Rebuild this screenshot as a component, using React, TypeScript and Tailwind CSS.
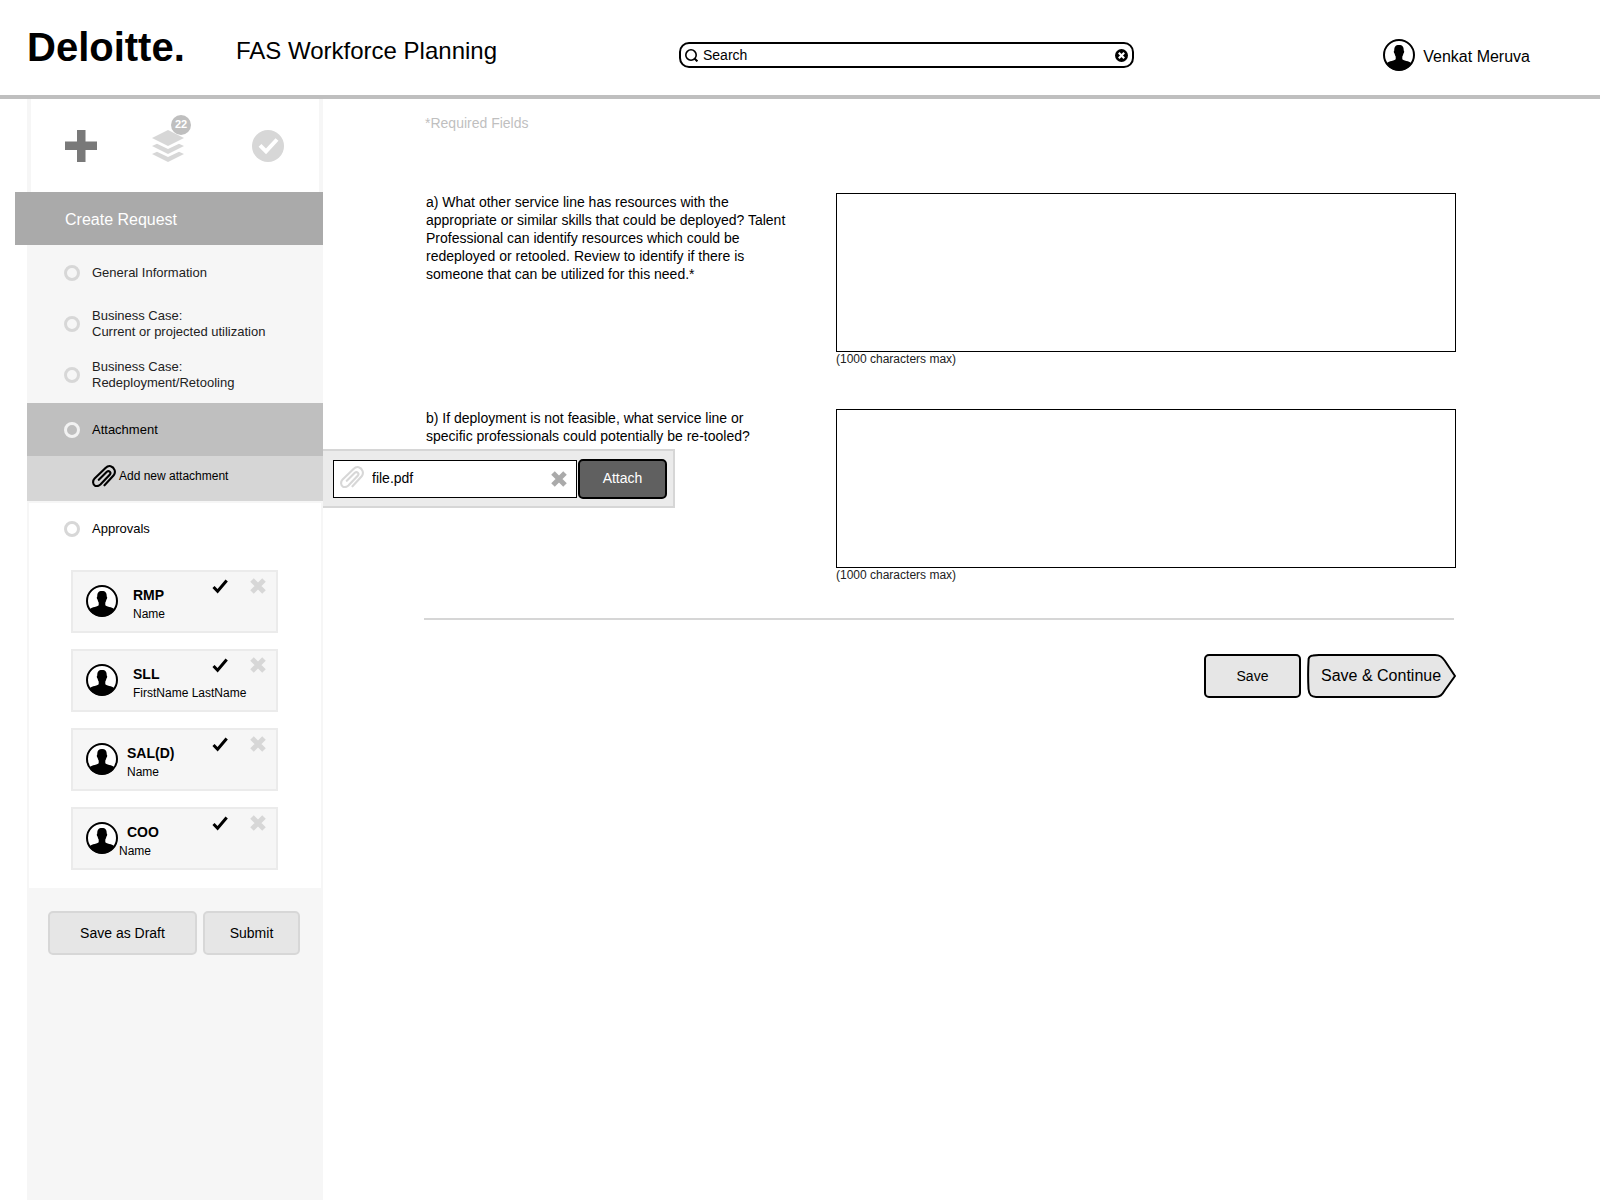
import clsx from 'clsx';

const steps = [
  { id: 'general', lines: ['General Information'] },
  { id: 'utilization', lines: ['Business Case:', 'Current or projected utilization'] },
  { id: 'redeployment', lines: ['Business Case:', 'Redeployment/Retooling'] },
];

const approvers = [
  { role: 'RMP', name: 'Name', indent: 'pl-[15px]', nameIndent: '' },
  { role: 'SLL', name: 'FirstName LastName', indent: 'pl-[15px]', nameIndent: '' },
  { role: 'SAL(D)', name: 'Name', indent: 'pl-[9px]', nameIndent: '' },
  { role: 'COO', name: 'Name', indent: 'pl-[9px]', nameIndent: '-ml-2' },
];

const questions = [
  {
    id: 'question-a',
    text: 'a) What other service line has resources with the appropriate or similar skills that could be deployed? Talent Professional can identify resources which could be redeployed or retooled. Review to identify if there is someone that can be utilized for this need.*',
  },
  {
    id: 'question-b',
    text: 'b) If deployment is not feasible, what service line or specific professionals could potentially be re-tooled?',
  },
];

function Avatar() {
  return (
    <svg viewBox="0 0 32 32" className="h-8 w-8 shrink-0" aria-hidden="true">
      <circle cx="16" cy="16" r="15" fill="white" stroke="black" strokeWidth="2" />
      <path d="M16 6c3.600 0 4.900 2 4.700 5.500.8.300.6 2.600-.4 3.200-.2 1.300-.5 2.100-1 2.800v2.700c1.300 1.200 3.400 1.500 5.500 2.100 1.700.5 3 1.200 4 2.200A15.500 15.500 0 0 1 16 31.500 15.500 15.500 0 0 1 3.200 24.500c1-1 2.300-1.700 4-2.200 2.100-.6 4.200-.9 5.500-2.100v-2.700c-.5-.7-.8-1.500-1-2.800-1-.6-1.200-2.900-.4-3.200C11.100 8 12.400 6 16 6z" />
    </svg>
  );
}

function Paperclip({ className }: { className?: string }) {
  return (
    <svg
      viewBox="0 0 24 22"
      className={clsx('h-[22px] w-6 shrink-0', className)}
      fill="none"
      stroke="currentColor"
      strokeWidth="2.100"
      strokeLinecap="round"
      aria-hidden="true"
    >
      <path d="M12.500 20.300 21.700 10.300C24.200 7.300 22.500 2.300 18.700 1.200 16.500.700 14.800 1.700 13.500 3L2.600 13.600C.400 15.900.700 19.300 3 20.700 5 21.600 6.900 20.900 8.400 19.500L17.700 9.800C19.700 7.400 17 4.900 14.800 6.800L6.800 14.800" />
    </svg>
  );
}

function Cross({ className }: { className?: string }) {
  return (
    <svg viewBox="0 0 16 16" className={clsx('h-4 w-4', className)} aria-hidden="true">
      <path d="M2 2 14 14M14 2 2 14" stroke="currentColor" strokeWidth="5" />
    </svg>
  );
}

function Check() {
  return (
    <svg viewBox="0 0 16 16" className="h-4 w-4" aria-hidden="true">
      <path d="M1.500 9 5.600 13.300 14.700 2.500" fill="none" stroke="black" strokeWidth="3" />
    </svg>
  );
}

function Step({ id, lines, checked }: { id: string; lines: string[]; checked?: boolean }) {
  return (
    <label className="flex items-center gap-3 text-[13px] leading-4">
      <input
        type="radio"
        name="step"
        value={id}
        defaultChecked={checked}
        className="h-4 w-4 shrink-0 appearance-none rounded-full border-[3px] border-[#d7d7d7] checked:border-[#f2f2f2]"
      />
      <span>
        {lines.map((line) => (
          <span key={line} className="block">{line}</span>
        ))}
      </span>
    </label>
  );
}

function Header() {
  return (
    <header className="flex h-[99px] border-b-4 border-[#bfbfbf] pl-[27px]">
      <div className="w-[209px] shrink-0 pt-6 text-[40px] leading-[46px] font-bold">Deloitte.</div>
      <h1 className="w-[443px] shrink-0 pt-[37px] text-2xl leading-7">FAS Workforce Planning</h1>
      <div className="mt-[42px] flex h-[26px] min-w-0 flex-1 items-center rounded-[10px] border-2 border-black px-1">
        <svg viewBox="0 0 13 13" className="h-[13px] w-[13px] shrink-0" fill="none" stroke="black" strokeWidth="1.600" aria-hidden="true">
          <circle cx="6" cy="6" r="5.200" />
          <path d="M9.500 9.500 12.400 12.400" strokeWidth="2" />
        </svg>
        <input
          type="text"
          aria-label="Search"
          defaultValue="Search"
          className="min-w-0 flex-1 pl-[5px] text-sm leading-[18px] outline-none"
        />
        <button type="button" aria-label="Clear search">
          <svg viewBox="0 0 13 13" className="h-[13px] w-[13px]" aria-hidden="true">
            <circle cx="6.500" cy="6.500" r="6.500" />
            <path d="M3.800 3.800 9.200 9.200M9.200 3.800 3.800 9.200" stroke="white" strokeWidth="2.200" />
          </svg>
        </button>
      </div>
      <div className="flex w-[466px] shrink-0 items-start justify-end gap-2 pt-[39px] pr-[70px]">
        <Avatar />
        <span className="pt-2 leading-5">Venkat Meruva</span>
      </div>
    </header>
  );
}

function AttachPopover() {
  return (
    <form className="absolute top-[-7px] left-full z-10 flex h-[59px] w-[352px] items-center border-y-2 border-r-2 border-[#d6d6d6] bg-[#ebebeb] pl-2.5">
      <div className="flex h-[38px] w-[244px] items-center border border-black bg-white pr-[9px] pl-1.5">
        <Paperclip className="-mt-1 text-[#d7d7d7]" />
        <input
          type="text"
          aria-label="File name"
          defaultValue="file.pdf"
          className="min-w-0 flex-1 pb-0.5 pl-2 text-sm leading-[18px] outline-none"
        />
        <button type="button" aria-label="Remove file">
          <Cross className="text-[#aaa]" />
        </button>
      </div>
      <button type="button" className="ml-px h-10 w-[89px] rounded-[5px] border-2 border-black bg-[#606060] pb-0.5 text-sm text-white">
        Attach
      </button>
    </form>
  );
}

function Sidebar() {
  return (
    <aside className="ml-[27px] w-[296px] shrink-0 bg-[#f6f6f6]">
      <div className="flex h-[93px] items-center border-x-4 border-[#f6f6f6] bg-white pl-[34px]">
        <button type="button" aria-label="Create request">
          <svg viewBox="0 0 32 32" className="h-8 w-8" fill="#797979" aria-hidden="true">
            <path d="M12 0h8.500v11.500H32V20H20.500V32H12V20H0V11.500h12z" />
          </svg>
        </button>
        <button type="button" aria-label="Pending requests" className="relative ml-[55px]">
          <svg viewBox="0 0 32 32" className="h-8 w-8" fill="#d7d7d7" aria-hidden="true">
            <path d="M16 0 32 8 16 16 0 8zM0 16l5-2.200 11 5.200 11-5.200 5 2.200-16 8zM0 24l5-2.200L16 27l11-5.200 5 2.200-16 8z" />
          </svg>
          <span className="absolute -top-[15px] left-[19px] h-5 w-5 rounded-full bg-[#bfbfbf] text-center text-[11px] leading-[18px] font-bold text-white">
            22
          </span>
        </button>
        <button type="button" aria-label="Approved requests" className="ml-[68px]">
          <svg viewBox="0 0 32 32" className="h-8 w-8" aria-hidden="true">
            <circle cx="16" cy="16" r="16" fill="#d7d7d7" />
            <path d="M8 15.300 14 21.300 25 9.500" fill="none" stroke="white" strokeWidth="4" />
          </svg>
        </button>
      </div>

      <h2 className="-ml-3 flex h-[53px] items-center bg-[#aaa] pt-0.5 pl-[50px] text-base text-white">Create Request</h2>

      <div className="h-[158px] pt-0.5 pl-[37px] text-[#222]">
        {steps.map((step) => (
          <div key={step.id} className="flex h-[51px] items-center">
            <Step {...step} />
          </div>
        ))}
      </div>

      <div className="flex h-[53px] items-center bg-[#bfbfbf] pl-[37px]">
        <Step id="attachment" lines={['Attachment']} checked />
      </div>
      <div className="relative bg-[#d6d6d6]">
        <button type="button" className="flex h-[45px] w-full items-center gap-[3px] pb-1.5 pl-[65px] text-xs">
          <Paperclip />
          Add new attachment
        </button>
        <AttachPopover />
      </div>

      <div className="border-2 border-[#f6f6f6] bg-white pt-[18px] pb-[18px]">
        <div className="pl-[35px]">
          <Step id="approvals" lines={['Approvals']} />
        </div>
        <ul className="mt-[33px] mr-[43px] ml-[42px] flex flex-col gap-4">
          {approvers.map((approver) => (
            <li key={approver.role} className="flex h-[63px] items-start border-2 border-[#ebebeb] bg-[#f6f6f6] pr-2.5 pl-[13px]">
              <div className="pt-[13px]">
                <Avatar />
              </div>
              <div className={clsx('min-w-0 flex-1 pt-3.5 whitespace-nowrap', approver.indent)}>
                <p className="text-sm leading-[18px] font-bold">{approver.role}</p>
                <p className={clsx('text-xs leading-5', approver.nameIndent)}>{approver.name}</p>
              </div>
              <div className="flex gap-[22px] pt-1.5">
                <button type="button" aria-label={`Approve ${approver.role}`}>
                  <Check />
                </button>
                <button type="button" aria-label={`Reject ${approver.role}`}>
                  <Cross className="text-[#d7d7d7]" />
                </button>
              </div>
            </li>
          ))}
        </ul>
      </div>

      <div className="flex gap-1.5 pt-[21px] pl-[21px] text-sm">
        <button type="button" className="h-11 w-[149px] rounded-[5px] border-2 border-[#d7d7d7] bg-[#e6e6e6]">
          Save as Draft
        </button>
        <button type="button" className="h-11 w-[97px] rounded-[5px] border-2 border-[#d7d7d7] bg-[#e6e6e6]">
          Submit
        </button>
      </div>
    </aside>
  );
}

export default function App() {
  return (
    <div className="flex min-h-screen flex-col bg-white font-['Liberation_Sans',Arial,sans-serif] text-black">
      <Header />
      <div className="flex flex-1">
        <Sidebar />
        <main className="min-w-0 flex-1 pt-[15px] pr-36 pl-[101px]">
          <p className="pl-px text-sm leading-[18px] text-[#bfbfbf]">*Required Fields</p>

          <div className="mt-[61px] flex flex-col gap-[43px]">
            {questions.map((question) => (
              <div key={question.id} className="flex">
                <div className="w-[412px] shrink-0 pl-0.5">
                  <label htmlFor={question.id} className="block w-[364px] text-sm leading-[18px]">
                    {question.text}
                  </label>
                </div>
                <div className="min-w-0 flex-1">
                  <textarea id={question.id} className="block h-[159px] w-full resize-none border border-black bg-white p-2 text-sm" />
                  <p className="text-xs leading-[14px] text-[#222]">(1000 characters max)</p>
                </div>
              </div>
            ))}
          </div>

          <hr className="mt-9 mr-0.5 border-t-2 border-[#d6d6d6]" />

          <div className="mt-[34px] flex justify-end gap-1.5">
            <button type="button" className="h-11 w-[97px] rounded-[5px] border-2 border-black bg-[#e6e6e6] text-sm">
              Save
            </button>
            <button type="button" className="relative h-11 w-[149px] pl-3.5 text-left text-base">
              <svg viewBox="0 0 149 44" className="absolute inset-0 h-full w-full" aria-hidden="true">
                <path
                  d="M6 1.500Q8 1 12 1H128C133 1 135 3 138 7L148 22 138 36C135 41 133 43 128 43H9C4 43 2 41 1.500 35Q.700 20 1.600 5 2 2 6 1.500z"
                  fill="#e6e6e6"
                  stroke="black"
                  strokeWidth="2"
                />
              </svg>
              <span className="relative whitespace-nowrap">Save &amp; Continue</span>
            </button>
          </div>
        </main>
      </div>
    </div>
  );
}
